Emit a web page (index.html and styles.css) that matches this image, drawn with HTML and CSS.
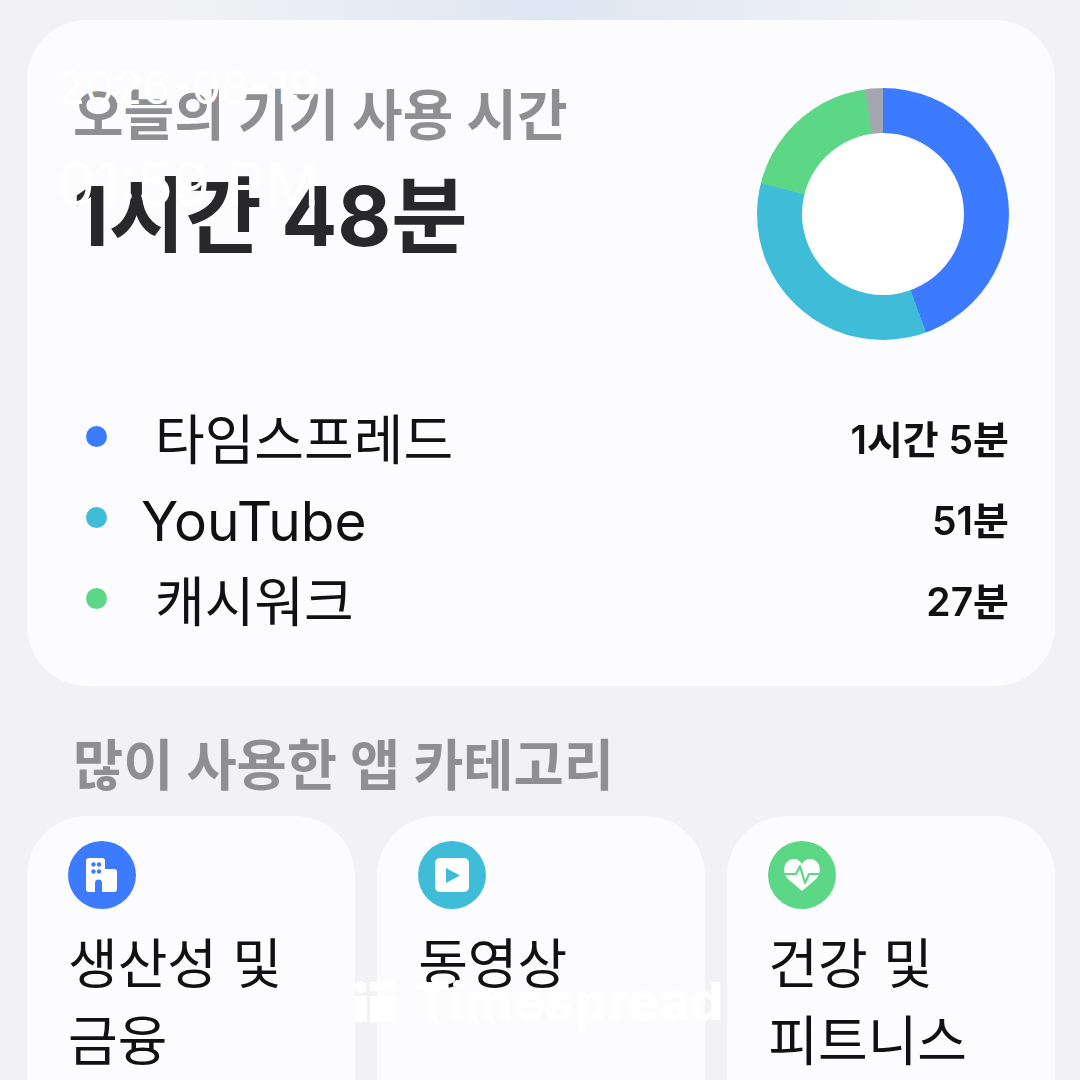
FILE: index.html
```html
<!DOCTYPE html>
<html lang="ko">

<head>
<title>Timespread</title>
<meta charset="utf-8" />
<meta name="viewport" content="width=device-width, initial-scale=1.0">

<link rel="stylesheet" href="styles.css">
</head>

<body>
<div class="top-glow"></div>

<section class="card usage">
  <div class="usage-head">
    <div>
      <h2 class="usage-title">오늘의 기기 사용 시간</h2>
      <p class="usage-total">1시간 48분</p>
    </div>
    <div class="donut"></div>
  </div>
  <ul class="apps">
    <li class="app">
      <span class="dot dot-blue"></span>
      <span class="app-name app-name-kr">타임스프레드</span>
      <span class="app-time">1시간 5분</span>
    </li>
    <li class="app">
      <span class="dot dot-teal"></span>
      <span class="app-name app-name-en">YouTube</span>
      <span class="app-time">51분</span>
    </li>
    <li class="app">
      <span class="dot dot-green"></span>
      <span class="app-name app-name-kr">캐시워크</span>
      <span class="app-time">27분</span>
    </li>
  </ul>
</section>

<h2 class="section-title">많이 사용한 앱 카테고리</h2>

<div class="categories">
  <div class="card category">
    <svg class="cat-icon" viewBox="0 0 68 68">
      <circle cx="34" cy="34" r="34" fill="#3c7bff"/>
      <path fill="#fff" d="M21 17h13a3 3 0 0 1 3 3v8h9a3 3 0 0 1 3 3v17a3 3 0 0 1-3 3H34v-9a3.500 3.500 0 0 0-7 0v9h-6a3 3 0 0 1-3-3V20a3 3 0 0 1 3-3z"/>
      <g fill="#3c7bff">
        <circle cx="25.500" cy="23.500" r="2.200"/><circle cx="31" cy="23.500" r="2.200"/>
        <circle cx="25.500" cy="30.500" r="2.200"/><circle cx="31" cy="30.500" r="2.200"/>
      </g>
    </svg>
    <p class="cat-name">생산성 및<br>금융</p>
  </div>
  <div class="card category">
    <svg class="cat-icon" viewBox="0 0 68 68">
      <circle cx="34" cy="34" r="34" fill="#3fbdd8"/>
      <rect x="17" y="17" width="34" height="34" rx="5" fill="#fff"/>
      <path fill="#3fbdd8" d="M28 27l14 7.500-14 7.500z"/>
    </svg>
    <p class="cat-name">동영상</p>
  </div>
  <div class="card category">
    <svg class="cat-icon" viewBox="0 0 68 68">
      <circle cx="34" cy="34" r="34" fill="#5cd786"/>
      <path fill="#fff" d="M34 50L20 38c-7-7-4-20 6-20 4 0 6 2 8 5 2-3 4-5 8-5 10 0 13 13 6 20z"/>
      <path fill="none" stroke="#5cd786" stroke-width="2.200" stroke-linejoin="round" d="M14 33h14l4-8 5 17 4-9h13"/>
    </svg>
    <p class="cat-name">건강 및<br>피트니스</p>
  </div>
</div>

<!-- stamps that sit on top of the screenshot -->
<div class="stamp stamp-date">2026-08-19</div>
<div class="stamp stamp-time">01:59 PM</div>
<div class="stamp stamp-brand">
  <svg class="brand-icon" viewBox="0 0 44 44">
    <circle cx="7" cy="7" r="6" fill="#fff"/>
    <rect x="1" y="16" width="12" height="26" fill="#fff"/>
    <rect x="16" y="2" width="25" height="9" fill="#fff"/>
    <rect x="16" y="16" width="25" height="26" fill="#fff"/>
  </svg>
  <span>Timespread</span>
</div>
</body>

</html>
```

FILE: styles.css
```css
* {
  box-sizing: border-box;
}

html, body {
  height: 1080px;
  overflow: hidden;
}

body {
  position: relative;
  margin: 0;
  padding: 20px 25px 0 27px;
  background-color: #f2f2f4;
  font-family: Inter, "Noto Sans CJK KR", sans-serif;
  color: #000;
}

.top-glow {
  position: absolute;
  top: 0;
  left: 160px;
  width: 770px;
  height: 20px;
  background: linear-gradient(90deg, #f2f2f4, #dde7f3 50%, #f2f2f4);
}

.card {
  background-color: #fcfcfe;
  border-radius: 60px;
}

.usage {
  position: relative;
  height: 666px;
  padding: 67px 46px 0 46px;
}

.usage-head {
  display: flex;
  justify-content: space-between;
  align-items: flex-start;
  height: 309px;
  filter: blur(0.5px);
}

.usage-title {
  margin: 0;
  font-size: 55px;
  line-height: 56px;
  font-weight: 700;
  color: #8e8e93;
}

.usage-total {
  margin: 28px 0 0;
  font-size: 83px;
  line-height: 90px;
  font-weight: 700;
  color: #28282c;
}

.donut {
  position: relative;
  width: 252px;
  height: 252px;
  margin-top: 1px;
  border-radius: 50%;
  background: conic-gradient(#3c7bff 0 160deg, #3fbdd8 160deg 284deg, #5cd786 284deg 352deg, #a4a6b2 352deg 360deg);
}

.donut::after {
  content: "";
  position: absolute;
  inset: 45px;
  border-radius: 50%;
  background-color: #fff;
}

.apps {
  list-style: none;
  margin: 0;
  padding: 0 0 0 13px;
  filter: blur(0.5px);
}

.app {
  display: flex;
  align-items: center;
  height: 81px;
}

.dot {
  width: 21px;
  height: 21px;
  margin-right: 34px;
  border-radius: 50%;
}

.dot-blue {
  background-color: #3c7bff;
}

.dot-teal {
  background-color: #3fbdd8;
}

.dot-green {
  background-color: #5cd786;
}

.app-name {
  font-size: 55px;
  color: #111;
}

.app-name-en {
  padding-top: 6px;
}

.app-name-kr {
  padding-left: 14px;
  font-size: 54px;
}

.app-time {
  margin-left: auto;
  font-size: 39px;
  font-weight: 600;
  color: #111;
}

.section-title {
  margin: 49px 0 0 46px;
  font-size: 54.600px;
  line-height: 60px;
  font-weight: 700;
  color: #8e8e93;
  filter: blur(0.5px);
}

.categories {
  display: grid;
  grid-template-columns: repeat(3, 1fr);
  gap: 22.500px;
  margin-top: 21px;
}

.category {
  height: 400px;
  padding: 25px 41px;
}

.cat-icon {
  display: block;
  width: 68px;
  height: 68px;
}

.cat-name {
  margin: 17px 0 0;
  font-size: 54px;
  line-height: 77px;
  color: #111;
  filter: blur(0.5px);
}

.stamp {
  position: absolute;
  color: #fff;
  white-space: nowrap;
}

.stamp-date {
  left: 57px;
  top: 60px;
  font-size: 46px;
  line-height: 54px;
}

.stamp-time {
  left: 57px;
  top: 152px;
  font-size: 60px;
  line-height: 64px;
}

.stamp-brand {
  display: flex;
  align-items: center;
  gap: 17px;
  left: 354px;
  top: 972px;
  font-size: 52px;
  line-height: 60px;
  font-weight: 800;
}

.brand-icon {
  width: 44px;
  height: 44px;
}
```
